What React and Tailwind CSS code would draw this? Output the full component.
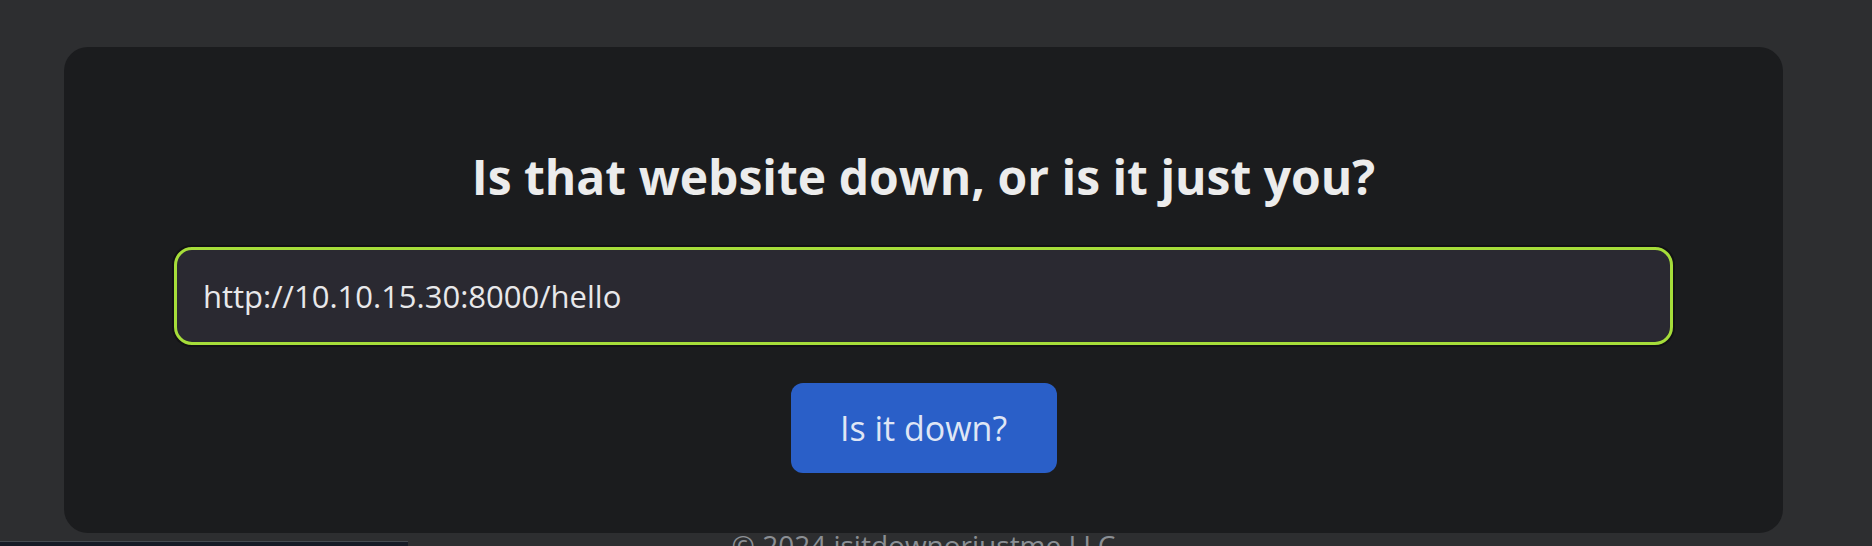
export default function App() {
  return (
    <div className="relative h-[546px] w-full overflow-hidden bg-[#2d2e30]" style={{ fontFamily: '"Open Sans", "Noto Sans", sans-serif' }}>
      <div className="ml-[64px] w-[1719px]">
        <div className="mt-[47px] h-[486px] rounded-[24px] bg-[#1b1c1e] px-[110px] pt-[100px]">
          <h1 className="text-center text-[48px] font-bold leading-[60px] text-[#ececec]">
            Is that website down, or is it just you?
          </h1>
          <input
            type="text"
            defaultValue="http://10.10.15.30:8000/hello"
            className="mt-[40px] h-[98px] w-full rounded-[18px] border-[3px] border-[#a6dd3a] bg-[#2a2931] px-[26px] text-[31px] text-[#e8e8ea] shadow-[0_0_0_2px_#121214] outline-none"
          />
          <div className="mt-[38px] flex justify-center">
            <button className="h-[90px] w-[266px] rounded-[12px] bg-[#2a5fc8] text-[34px] text-[#dfe6f5]">
              Is it down?
            </button>
          </div>
        </div>
        <p className="-mt-[2px] text-center text-[28px] leading-[28px] text-[#8b8f94]">© 2024 isitdownorjustme LLC</p>
      </div>
      <div className="absolute bottom-0 left-0 h-[5px] w-[408px] border-t border-[#454a50] bg-[#161b26]" />
    </div>
  );
}
